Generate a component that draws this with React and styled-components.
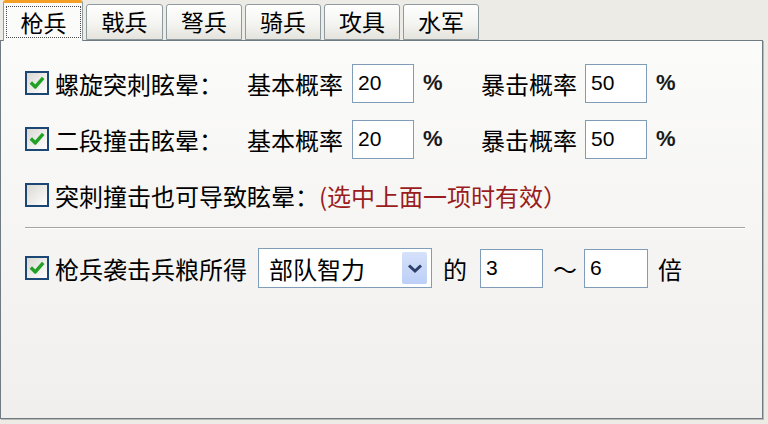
import React from "react";
import styled, { createGlobalStyle } from "styled-components";

const GlobalStyle = createGlobalStyle`
  html, body {
    margin: 0;
    padding: 0;
    background: #ecebe6;
  }
  body {
    font-family: "Noto Sans CJK SC", "Noto Sans", sans-serif;
    color: #000;
  }
`;

const Window = styled.div`
  width: 768px;
  height: 424px;
  display: flex;
  flex-direction: column;
  background: #ecebe6;
`;

const TabBar = styled.div`
  display: flex;
  align-items: flex-end;
  gap: 3px;
  height: 40px;
  padding-left: 3px;
  position: relative;
  z-index: 1;
`;

const Tab = styled.div`
  width: ${(p) => p.$w}px;
  height: ${(p) => (p.$active ? 41 : 36)}px;
  margin-bottom: ${(p) => (p.$active ? -1 : 0)}px;
  box-sizing: border-box;
  display: flex;
  align-items: center;
  justify-content: center;
  border: 1px solid #8f9a9e;
  border-bottom: ${(p) => (p.$active ? "none" : "1px solid #8f9a9e")};
  border-top: ${(p) => (p.$active ? "3px solid #f4a025" : "1px solid #8f9a9e")};
  border-radius: 3px 3px 0 0;
  background: ${(p) =>
    p.$active
      ? "#fbfbfa"
      : "linear-gradient(#ffffff, #f4f4f1 55%, #e4e3dd)"};
  padding: ${(p) => (p.$active ? "3px 1px 3px 2px" : "0 0 2px 0")};
  font-size: 23px;
  line-height: 1;
`;

const FocusLabel = styled.div`
  flex: 1;
  align-self: stretch;
  display: flex;
  align-items: center;
  justify-content: center;
  border: 1px dotted #4a4a4a;
`;

const Panel = styled.div`
  flex: 1;
  margin: 0 5px 5px 0;
  border: 1px solid #6f7a82;
  box-shadow: 1px 1px 0 #b9b8b2;
  background: linear-gradient(#fbfbfa, #f0efed);
  padding: 22px 0 0 24px;
  display: flex;
  flex-direction: column;
`;

const Row = styled.div`
  display: flex;
  align-items: center;
  height: 40px;
  margin-top: ${(p) => p.$mt || 0}px;
`;

const Box = styled.div`
  width: 24px;
  height: 24px;
  box-sizing: border-box;
  border: 2px solid #1c4674;
  background: linear-gradient(135deg, #d9d8d2, #ffffff);
  display: flex;
  align-items: center;
  justify-content: center;
  flex-shrink: 0;
`;

const Text = styled.span`
  font-size: 24px;
  white-space: nowrap;
  margin-left: ${(p) => p.$ml || 0}px;
  width: ${(p) => (p.$w ? `${p.$w}px` : "auto")};
  color: ${(p) => p.$color || "#000"};
  flex-shrink: 0;
`;

const NumberBox = styled.div`
  width: ${(p) => p.$w}px;
  height: 39px;
  box-sizing: border-box;
  margin-left: ${(p) => p.$ml || 0}px;
  border: 1px solid #7f9db9;
  background: #fff;
  display: flex;
  align-items: center;
  padding-left: 5px;
  font-family: "Liberation Sans", Arial, sans-serif;
  font-size: 21px;
  flex-shrink: 0;
`;

const Percent = styled.span`
  width: 16px;
  margin-left: 9px;
  font-family: "Liberation Sans", Arial, sans-serif;
  font-size: 22px;
  font-weight: bold;
  color: #1a1a1a;
  flex-shrink: 0;
`;

const Separator = styled.div`
  width: 720px;
  height: 0;
  margin-top: 12px;
  border-top: 1px solid #a5a4a0;
  border-bottom: 1px solid #ffffff;
`;

const Select = styled.div`
  width: 174px;
  height: 40px;
  box-sizing: border-box;
  margin-left: 11px;
  border: 1px solid #7f9db9;
  background: #fff;
  display: flex;
  align-items: center;
  justify-content: space-between;
  padding: 0 4px 0 10px;
  font-size: 24px;
`;

const DropButton = styled.div`
  width: 25px;
  height: 32px;
  border-radius: 2px;
  background: linear-gradient(#d6e1fb, #bccff6);
  display: flex;
  align-items: center;
  justify-content: center;
`;

const Check = ({ on }) => (
  <Box>
    {on && (
      <svg width="18" height="18" viewBox="0 0 16 16">
        <path d="M2.5 7.5 L6.5 11.5 L13.5 3.5" fill="none" stroke="#21a124" strokeWidth="3" strokeLinejoin="round" />
      </svg>
    )}
  </Box>
);

const Chevron = () => (
  <svg width="16" height="11" viewBox="0 0 16 11">
    <path d="M2 2.5 L8 8 L14 2.5" fill="none" stroke="#2c3f6b" strokeWidth="3" />
  </svg>
);

const tabs = [
  { label: "枪兵", w: 80 },
  { label: "戟兵", w: 77 },
  { label: "弩兵", w: 76 },
  { label: "骑兵", w: 76 },
  { label: "攻具", w: 76 },
  { label: "水军", w: 76 },
];

const rateRows = [
  { label: "螺旋突刺眩晕：", base: "20", crit: "50" },
  { label: "二段撞击眩晕：", base: "20", crit: "50" },
];

export default function App() {
  return (
    <Window>
      <GlobalStyle />
      <TabBar>
        {tabs.map((t, i) => (
          <Tab key={t.label} $w={t.w} $active={i === 0}>
            {i === 0 ? <FocusLabel>{t.label}</FocusLabel> : t.label}
          </Tab>
        ))}
      </TabBar>
      <Panel>
        {rateRows.map((r, i) => (
          <Row key={r.label} $mt={i === 0 ? 0 : 16}>
            <Check on />
            <Text $ml={6} $w={192}>{r.label}</Text>
            <Text>基本概率</Text>
            <NumberBox $w={62} $ml={9}>{r.base}</NumberBox>
            <Percent>%</Percent>
            <Text $ml={42}>暴击概率</Text>
            <NumberBox $w={62} $ml={8}>{r.crit}</NumberBox>
            <Percent>%</Percent>
          </Row>
        ))}
        <Row $mt={16}>
          <Check />
          <Text $ml={6}>突刺撞击也可导致眩晕：</Text>
          <Text $color="#9a1c1c">(选中上面一项时有效）</Text>
        </Row>
        <Separator />
        <Row $mt={19}>
          <Check on />
          <Text $ml={6} $w={192}>枪兵袭击兵粮所得</Text>
          <Select>
            部队智力
            <DropButton>
              <Chevron />
            </DropButton>
          </Select>
          <Text $ml={11}>的</Text>
          <NumberBox $w={63} $ml={13}>3</NumberBox>
          <Text $ml={10}>～</Text>
          <NumberBox $w={64} $ml={7}>6</NumberBox>
          <Text $ml={10}>倍</Text>
        </Row>
      </Panel>
    </Window>
  );
}
